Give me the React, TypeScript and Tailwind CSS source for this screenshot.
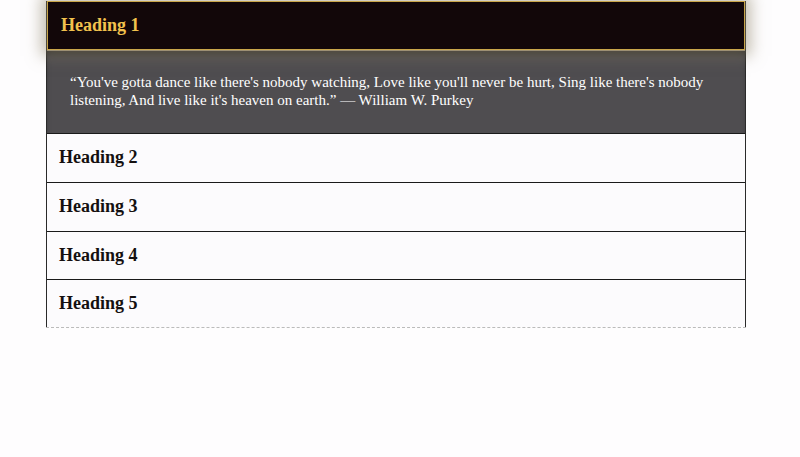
import React from "react";

const serif = { fontFamily: '"Liberation Serif", "Times New Roman", serif' };

export default function App() {
  const rows = [
    { t: "Heading 2", h: "h-[49px]" },
    { t: "Heading 3", h: "h-[49px]" },
    { t: "Heading 4", h: "h-[48px]" },
    { t: "Heading 5", h: "h-[48px]" },
  ];
  return (
    <div className="w-[800px] h-[457px] bg-[#fefdfe] pt-[1px]" style={serif}>
      <div className="ml-[46px] w-[700px] border-l border-r border-[#2a2a2a]">
        <div className="relative z-10 h-[49px] bg-[#120709] border border-[#c9a64a] flex items-center pl-[13px] pb-[1px] shadow-[0_0_14px_6px_rgba(140,130,100,0.5)]">
          <span className="text-[18px] font-bold text-[#f2c24e]">Heading 1</span>
        </div>
        <div className="bg-[#4f4d50] border-t border-[#a89a80] px-[23px] pt-[22px] pb-[23px] h-[83px] text-[15px] leading-[18px] text-white shadow-[inset_0_6px_6px_-3px_rgba(0,0,0,0.5)]">
          “You've gotta dance like there's nobody watching, Love like you'll never be hurt, Sing like there's nobody listening, And live like it's heaven on earth.” — William W. Purkey
        </div>
        {rows.map((r) => (
          <div
            key={r.t}
            className={r.h + " bg-[#fcfbfd] border-t border-[#1a1a1a] flex items-center pl-[12px] pb-[1px]"}
          >
            <span className="text-[18px] font-bold text-[#141010]">{r.t}</span>
          </div>
        ))}
      </div>
      <div className="ml-[46px] w-[700px] border-t border-dashed border-[#bbb]" />
    </div>
  );
}
